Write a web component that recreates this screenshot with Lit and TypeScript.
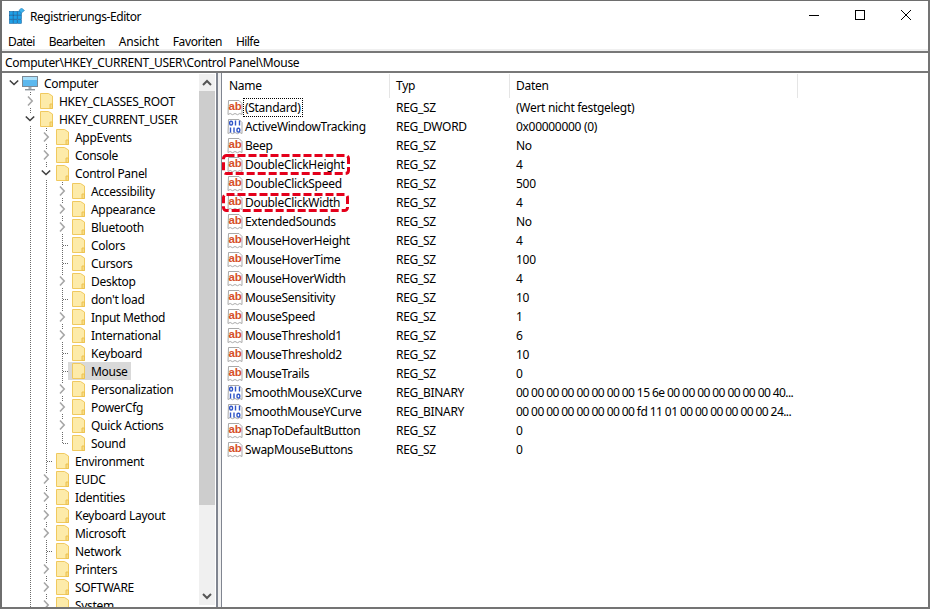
import { LitElement, html, css, svg, nothing } from "lit";
import { customElement } from "lit/decorators.js";

type Kind = "closed" | "open" | "leaf" | "last";
const T: [number, string, Kind, boolean?][] = [
  [0, "Computer", "open"],
  [1, "HKEY_CLASSES_ROOT", "closed"],
  [1, "HKEY_CURRENT_USER", "open"],
  [2, "AppEvents", "closed"],
  [2, "Console", "closed"],
  [2, "Control Panel", "open"],
  [3, "Accessibility", "closed"],
  [3, "Appearance", "closed"],
  [3, "Bluetooth", "closed"],
  [3, "Colors", "leaf"],
  [3, "Cursors", "leaf"],
  [3, "Desktop", "closed"],
  [3, "don't load", "leaf"],
  [3, "Input Method", "closed"],
  [3, "International", "closed"],
  [3, "Keyboard", "leaf"],
  [3, "Mouse", "leaf", true],
  [3, "Personalization", "closed"],
  [3, "PowerCfg", "closed"],
  [3, "Quick Actions", "closed"],
  [3, "Sound", "last"],
  [2, "Environment", "leaf"],
  [2, "EUDC", "closed"],
  [2, "Identities", "closed"],
  [2, "Keyboard Layout", "closed"],
  [2, "Microsoft", "closed"],
  [2, "Network", "leaf"],
  [2, "Printers", "closed"],
  [2, "SOFTWARE", "closed"],
  [2, "System", "closed"],
];

const R: [string, string, string][] = [
  ["(Standard)", "REG_SZ", "(Wert nicht festgelegt)"],
  ["ActiveWindowTracking", "REG_DWORD", "0x00000000 (0)"],
  ["Beep", "REG_SZ", "No"],
  ["DoubleClickHeight", "REG_SZ", "4"],
  ["DoubleClickSpeed", "REG_SZ", "500"],
  ["DoubleClickWidth", "REG_SZ", "4"],
  ["ExtendedSounds", "REG_SZ", "No"],
  ["MouseHoverHeight", "REG_SZ", "4"],
  ["MouseHoverTime", "REG_SZ", "100"],
  ["MouseHoverWidth", "REG_SZ", "4"],
  ["MouseSensitivity", "REG_SZ", "10"],
  ["MouseSpeed", "REG_SZ", "1"],
  ["MouseThreshold1", "REG_SZ", "6"],
  ["MouseThreshold2", "REG_SZ", "10"],
  ["MouseTrails", "REG_SZ", "0"],
  ["SmoothMouseXCurve", "REG_BINARY", "00 00 00 00 00 00 00 00 15 6e 00 00 00 00 00 00 00 40..."],
  ["SmoothMouseYCurve", "REG_BINARY", "00 00 00 00 00 00 00 00 fd 11 01 00 00 00 00 00 00 24..."],
  ["SnapToDefaultButton", "REG_SZ", "0"],
  ["SwapMouseButtons", "REG_SZ", "0"],
];

const page = svg`<path d="M1.5 .5H12l3 3v11l-2.2-1-2.3 1.2-2.5-1.2-2.5 1.2-2.3-1.2-2.2 1z" fill="#fff" stroke="#a9a9a9"/>`;
const abIcon = html`<svg class="ri" width="16" height="16" viewBox="0 0 16 16">${page}<text x="1.4" y="10.2" class="ab">ab</text></svg>`;
const binIcon = html`<svg class="ri" width="16" height="16" viewBox="0 0 16 16">${page}
  <g fill="none" stroke="#2f55c8" stroke-width="1.4">
    <rect x="2.7" y="2.2" width="2.8" height="3.8" rx="1.2"/><path d="M8.5 1.5v5M12.5 1.5v5M3.5 8.5v5M7 8.5v5"/><rect x="10" y="9.2" width="2.8" height="3.8" rx="1.2"/>
  </g></svg>`;
const folder = html`<svg class="fi" width="13" height="16" viewBox="0 0 13 16">
  <path d="M.5.5H8.5L12.5 3V15.5H.5z" fill="#fdeba9" stroke="#f0c95f"/>
  <path d="M10 11h2.5v4.5H10z" fill="#f8dc85" stroke="#ecc250"/>
</svg>`;
const computer = html`<svg class="ci" width="16" height="16" viewBox="0 0 16 16">
  <rect x=".5" y="1.5" width="15" height="10" fill="#5cb8ee" stroke="#7d8a96"/>
  <rect x="1" y="2" width="14" height="3" fill="#a8e0fb"/>
  <rect x="6.5" y="12" width="3" height="2" fill="#a5adb4"/>
  <rect x="3" y="14" width="10" height="1.4" fill="#8d959c"/>
</svg>`;
const chevR = html`<svg class="ch" width="10" height="12" viewBox="0 0 10 12"><path d="M3 1.5 7.2 6 3 10.5" fill="none" stroke="#a6a6a6" stroke-width="1.6"/></svg>`;
const chevD = html`<svg class="ch" width="10" height="12" viewBox="0 0 10 12"><path d="M.8 3.5 5 7.5 9.2 3.5" fill="none" stroke="#404040" stroke-width="1.6"/></svg>`;
const sbUp = html`<svg width="10" height="7" viewBox="0 0 10 7"><path d="M1 6 5 2l4 4" fill="none" stroke="#555" stroke-width="2"/></svg>`;
const sbDn = html`<svg width="10" height="7" viewBox="0 0 10 7"><path d="M1 1l4 4 4-4" fill="none" stroke="#555" stroke-width="2"/></svg>`;

@customElement("app-root")
export class AppRoot extends LitElement {
  static styles = css`
    :host { display: block; width: 930px; height: 609px; background: #fff; overflow: hidden;
      font-family: "Noto Sans", sans-serif; font-size: 12px; color: #000; letter-spacing: -0.3px; }
    .win { box-sizing: border-box; height: 609px; display: flex; flex-direction: column;
      border-top: 1px solid #6e6e6e; border-left: 2px solid #6e6e6e; border-right: 2px solid #747474; border-bottom: 2px solid #747474; }
    .title { height: 29px; flex: none; display: flex; align-items: center; padding-left: 7px; }
    .logo { margin: 1px 5px 0 0; flex: none; }
    .ttxt { flex: 1; letter-spacing: -0.43px; padding-top: 2px; }
    .wc { width: 46px; height: 10px; display: flex; justify-content: center; }
    .wc svg { display: block; }
    .wcs { display: flex; margin: 0 -1px 1px 0; }
    .menu { box-sizing: border-box; height: 21px; flex: none; display: flex; align-items: center; padding: 4px 0 0 6px; gap: 14px; border-bottom: 2px solid #f0f0f0; letter-spacing: -0.6px; }
    .m-a { letter-spacing: -0.2px; }
    .m-f { letter-spacing: -0.4px; }
    .addr { height: 18px; flex: none; display: flex; align-items: center; padding-left: 3px;
      border-top: 2px solid #787878; border-bottom: 2px solid #787878; }
    .body { flex: 1; min-height: 0; display: flex; padding-top: 1px; }
    .tree { width: 197px; flex: none; overflow: hidden; }
    .tr { height: 18px; display: flex; align-items: center; white-space: nowrap; padding-left: 3px; }
    .c { width: 16px; height: 18px; flex: none; display: flex; align-items: center; justify-content: center; }
    .g { background-image: repeating-linear-gradient(#6a6a6a 0 1px, transparent 1px 2px);
      background-size: 1px 100%; background-position: 9px 0; background-repeat: no-repeat; }
    .t { background-image: repeating-linear-gradient(#6a6a6a 0 1px, transparent 1px 2px),
        repeating-linear-gradient(90deg, #6a6a6a 0 1px, transparent 1px 2px);
      background-size: 1px 100%, 7px 1px; background-position: 9px 0, 10px 9px; background-repeat: no-repeat; }
    .t.last { background-size: 1px 9px, 7px 1px; }
    .ch { background: #fff; display: block; margin-left: 1px; }
    .lab { display: flex; align-items: center; height: 18px; margin-left: -1px; padding: 0 3px 0 4px; }
    .lab.sel { background: #d9d9d9; }
    .fi { margin-right: 6px; flex: none; }
    .lab.pc { padding-left: 2px; }
    .ci { margin-right: 6px; flex: none; }
    .sb { width: 16px; flex: none; background: #f0f0f0; display: flex; flex-direction: column; margin-bottom: 2px; }
    .sbb { height: 17px; flex: none; display: flex; align-items: center; justify-content: center; }
    .thumb { height: 414px; flex: none; background: #cdcdcd; }
    .sp { flex: 1; }
    .gap { width: 1px; flex: none; }
    .split { width: 3px; flex: none; margin-top: -1px; background: #f0f0f0; border-left: 2px solid #808590; border-right: 1px solid #808590; }
    .list { flex: 1; min-width: 0; overflow: hidden; }
    .hd, .rw { display: grid; grid-template-columns: 168px 120px 288px 1fr; white-space: nowrap; }
    .hd { height: 24px; }
    .hd > div { padding: 0 0 2px 6px; display: flex; align-items: center; border-right: 1px solid #e5e5e5; }
    .hd > div:first-child { padding-left: 7px; }
    .hd > div:last-child { border-right: none; }
    .rw { height: 19px; }
    .rw > div { display: flex; align-items: center; padding-left: 6px; overflow: hidden; }
    .rw > .nm { padding-left: 5px; position: relative; overflow: visible; }
    .hex { letter-spacing: -0.58px; }
    .ri { flex: none; }
    .ab { font: bold 11.5px "Liberation Sans", sans-serif; fill: #d6502a; letter-spacing: 0; }
    .nt { padding: 0 2px 0 1px; border: 1px solid transparent; line-height: 17px; }
    .nt.foc { border: 1px dotted #000; }
    .mk { position: absolute; left: 0; top: -1px; }
    .mk.w { top: 0; }
  `;

  private tree() {
    return T.map(([lv, name, k, sel]) => {
      const cells = [];
      for (let i = 0; i < lv; i++) cells.push(html`<span class="c ${i > 0 ? "g" : ""}"></span>`);
      const exp = k === "open" || k === "closed"
        ? html`<span class="c ${lv > 0 ? "g" : ""}">${k === "open" ? chevD : chevR}</span>`
        : html`<span class="c t ${k === "last" ? "last" : ""}"></span>`;
      return html`<div class="tr">${cells}${exp}
        <span class="lab ${sel ? "sel" : ""} ${lv === 0 ? "pc" : ""}">${lv === 0 ? computer : folder}<span>${name}</span></span></div>`;
    });
  }

  private mark(w: number, h: number, cls: string) {
    return html`<svg class="mk ${cls}" width=${w} height=${h} viewBox="0 0 ${w} ${h}">
      <rect x="1.5" y="1.5" width=${w - 3} height=${h - 3} rx="3" fill="none" stroke="#e4001b" stroke-width="3" stroke-dasharray="8 3"/></svg>`;
  }

  render() {
    return html`<div class="win">
      <div class="title">
        <svg class="logo" width="16" height="16" viewBox="0 0 16 16">
          <g fill="#1f9fe6" stroke="#0b5f9e" stroke-width=".6">
            <rect x=".5" y="3.5" width="3.6" height="3.6"/><rect x="4.6" y="3.5" width="3.6" height="3.6"/><rect x="8.7" y="3.5" width="3.6" height="3.6"/>
            <rect x=".5" y="7.6" width="3.6" height="3.6"/><rect x="4.6" y="7.6" width="3.6" height="3.6"/><rect x="8.7" y="7.6" width="3.6" height="3.6"/>
            <rect x=".5" y="11.7" width="3.6" height="3.6"/><rect x="4.6" y="11.7" width="3.6" height="3.6"/><rect x="8.7" y="11.7" width="3.6" height="3.6"/>
          </g>
          <path d="M12.5 0 15.5 2.5 12.5 5 9.8 2.5z" fill="#3fb4ee" stroke="#1b6fa8" stroke-width=".5"/>
        </svg>
        <span class="ttxt">Registrierungs-Editor</span>
        <div class="wcs">
          <div class="wc"><svg width="10" height="10" viewBox="0 0 10 10"><path d="M0 5.5h10" stroke="#000"/></svg></div>
          <div class="wc"><svg width="10" height="10" viewBox="0 0 10 10"><rect x=".5" y=".5" width="9" height="9" fill="none" stroke="#000"/></svg></div>
          <div class="wc"><svg width="10" height="10" viewBox="0 0 10 10"><path d="M0 0l10 10M10 0 0 10" stroke="#000" stroke-width="1"/></svg></div>
        </div>
      </div>
      <div class="menu"><span>Datei</span><span>Bearbeiten</span><span class="m-a">Ansicht</span><span class="m-f">Favoriten</span><span>Hilfe</span></div>
      <div class="addr">Computer\\HKEY_CURRENT_USER\\Control Panel\\Mouse</div>
      <div class="body">
        <div class="tree">${this.tree()}</div>
        <div class="sb"><div class="sbb">${sbUp}</div><div class="thumb"></div><div class="sp"></div><div class="sbb">${sbDn}</div></div>
        <div class="gap"></div>
        <div class="split"></div>
        <div class="list">
          <div class="hd"><div>Name</div><div>Typ</div><div>Daten</div><div></div></div>
          ${R.map(([n, t, d], i) => html`<div class="rw">
            <div class="nm">${t === "REG_SZ" ? abIcon : binIcon}<span class="nt ${i === 0 ? "foc" : ""}">${n}</span>
              ${i === 3 ? this.mark(128, 21, "") : i === 5 ? this.mark(127, 19, "w") : nothing}</div>
            <div>${t}</div><div class="${t === "REG_BINARY" ? "hex" : ""}">${d}</div><div></div></div>`)}
        </div>
      </div>
    </div>`;
  }
}
